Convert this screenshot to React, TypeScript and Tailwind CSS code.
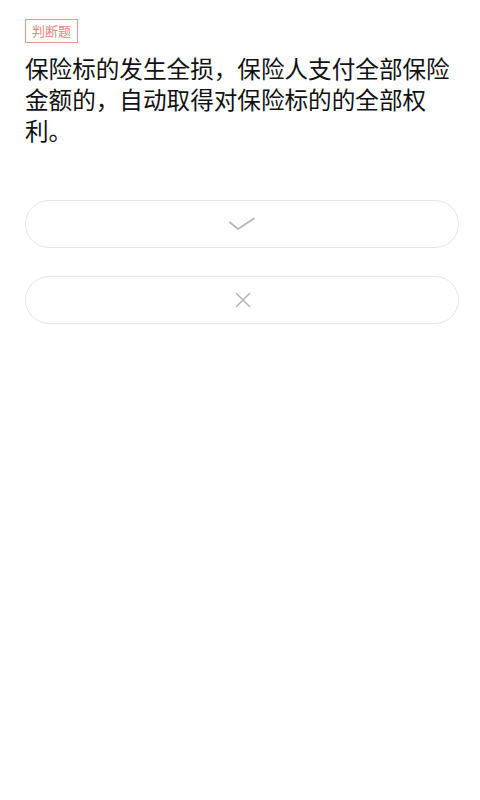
export default function App() {
  return (
    <div
      className="min-h-[800px] w-full bg-white"
      style={{ fontFamily: '"Noto Sans CJK SC", "Noto Sans", sans-serif' }}
    >
      <div className="pl-[25px] pr-[21px] pt-[17px]">
        <span className="inline-flex h-[24px] items-center border border-[#e9968b] px-[6px] text-[13px] leading-none text-[#e5877b]">
          判断题
        </span>
        <p className="mt-[10px] text-[23.6px] font-normal leading-[31px] text-[#111111]">
          保险标的发生全损，保险人支付全部保险金额的，自动取得对保险标的的全部权利。
        </p>
        <div className="mt-[54px] flex flex-col gap-[28px]">
          <button className="flex h-[48px] w-full items-center justify-center rounded-full border border-[#e6e6e6] bg-white">
            <svg width="26" height="14" viewBox="0 0 26 14" fill="none">
              <path d="M1 5.5 L9 12 L25 1.5" stroke="#b8b8b8" strokeWidth="1.8" strokeLinecap="round" strokeLinejoin="round" />
            </svg>
          </button>
          <button className="flex h-[48px] w-full items-center justify-center rounded-full border border-[#e6e6e6] bg-white">
            <svg width="16" height="16" viewBox="0 0 16 16" fill="none" className="ml-[2px]">
              <path d="M1.5 1.5 L14.5 14.5 M14.5 1.5 L1.5 14.5" stroke="#b8b8b8" strokeWidth="1.6" strokeLinecap="round" />
            </svg>
          </button>
        </div>
      </div>
    </div>
  );
}
